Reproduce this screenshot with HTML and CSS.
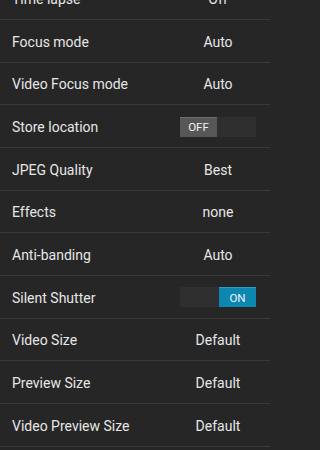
FILE: index.html
```html
<!DOCTYPE html>
<html>
<head>
<meta charset="utf-8">
<link rel="stylesheet" href="styles.css">
</head>
<body>
<div class="list">
  <div class="row"><span class="label">Time lapse</span><span class="value">Off</span></div>
  <div class="row"><span class="label">Focus mode</span><span class="value">Auto</span></div>
  <div class="row"><span class="label">Video Focus mode</span><span class="value">Auto</span></div>
  <div class="row"><span class="label">Store location</span>
    <span class="switch"><span class="thumb off">OFF</span><span class="empty"></span></span></div>
  <div class="row"><span class="label">JPEG Quality</span><span class="value">Best</span></div>
  <div class="row"><span class="label">Effects</span><span class="value">none</span></div>
  <div class="row"><span class="label">Anti-banding</span><span class="value">Auto</span></div>
  <div class="row"><span class="label">Silent Shutter</span>
    <span class="switch"><span class="empty"></span><span class="thumb on">ON</span></span></div>
  <div class="row"><span class="label">Video Size</span><span class="value">Default</span></div>
  <div class="row"><span class="label">Preview Size</span><span class="value">Default</span></div>
  <div class="row"><span class="label">Video Preview Size</span><span class="value">Default</span></div>
</div>
</body>
</html>
```
FILE: styles.css
```css
html, body {
  margin: 0;
  padding: 0;
  background: #262626;
  overflow: hidden;
}
body {
  width: 270px;
  height: 450px;
  font-family: Roboto, "Noto Sans", sans-serif;
  color: #e6e6e6;
}
.list {
  margin-top: -22.67px;
  display: flex;
  flex-direction: column;
}
.row {
  box-sizing: border-box;
  height: 42.67px;
  display: flex;
  align-items: center;
  padding: 0 14px 0 12px;
  border-bottom: 1px solid #3a3a3a;
  font-size: 14px;
}
.label {
  flex: 1;
  padding-top: 2px;
}
.value {
  width: 76px;
  text-align: center;
  padding-top: 2px;
}
.switch {
  width: 76px;
  height: 20px;
  margin-top: 1px;
  display: flex;
  background: #2f2f2f;
}
.thumb {
  width: 37px;
  height: 20px;
  display: flex;
  align-items: center;
  justify-content: center;
  font-size: 11.5px;
  color: #f2f2f2;
  box-sizing: border-box;
}
.thumb.off {
  background: #575757;
  border-top: 1px solid #6c6c6c;
}
.thumb.on {
  background: #0d87b2;
  border-top: 1px solid #2aa0c8;
}
.empty {
  flex: 1;
}
```
